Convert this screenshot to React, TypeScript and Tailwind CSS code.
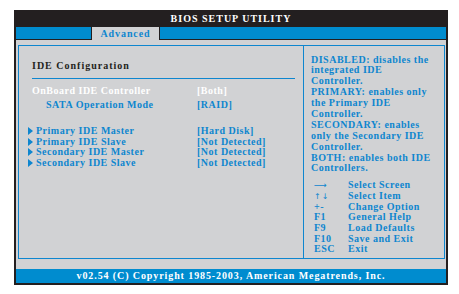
const font = { fontFamily: '"Liberation Serif", "Times New Roman", serif' };
const glyph = { fontFamily: '"DejaVu Sans", sans-serif', fontWeight: 400 };

const helpLines = [
  "DISABLED: disables the",
  "integrated IDE",
  "Controller.",
  "PRIMARY: enables only",
  "the Primary IDE",
  "Controller.",
  "SECONDARY: enables",
  "only the Secondary IDE",
  "Controller.",
  "BOTH: enables both IDE",
  "Controllers.",
];

const keys: [React.ReactNode, string][] = [
  [<span style={glyph} className="text-[9px]">{"\u27F6"}</span>, "Select Screen"],
  [<span style={glyph} className="text-[8px] tracking-[1px]">{"\u2191\u2193"}</span>, "Select Item"],
  ["+-", "Change Option"],
  ["F1", "General Help"],
  ["F9", "Load Defaults"],
  ["F10", "Save and Exit"],
  ["ESC", "Exit"],
];

const drives = [
  ["Primary IDE Master", "[Hard Disk]"],
  ["Primary IDE Slave", "[Not Detected]"],
  ["Secondary IDE Master", "[Not Detected]"],
  ["Secondary IDE Slave", "[Not Detected]"],
];

function Arrow() {
  return (
    <svg width="5" height="8" viewBox="0 0 5 8" className="mr-[3px] shrink-0">
      <path d="M0 0 L5 4 L0 8 Z" fill="#0e86cf" />
    </svg>
  );
}

export default function App() {
  return (
    <div className="w-[459px] h-[294px] bg-white pt-[10px] pl-[14px]" style={font}>
      <div className="w-[434px] bg-[#231f20] px-[2px] pb-[1.5px] font-bold">
        {/* title */}
        <div className="h-[17px] flex items-center justify-center text-white text-[10px] tracking-[1px] leading-none">
          BIOS SETUP UTILITY
        </div>

        {/* tab bar */}
        <div className="h-[13px] flex">
          <div className="w-[76px] bg-[#008ccf] border-r border-b border-[#231f20]" />
          <div className="w-[67px] bg-[#d1d2d4] flex items-center justify-center text-[10px] text-[#0e86cf] tracking-[0.9px] leading-none">
            Advanced
          </div>
          <div className="flex-1 bg-[#008ccf] border-l border-b border-[#231f20]" />
        </div>

        {/* main */}
        <div className="bg-[#d1d2d4] pt-[5px] pb-[10px] pl-[2px] pr-[1px]">
          <div className="h-[214px] border border-[#0e86cf] flex text-[10px] tracking-[0.5px]">
            {/* left pane */}
            <div className="w-[285px] border-r border-[#0e86cf] pt-[14px] pl-[13px] pr-[8px]">
              <div className="h-[12px] leading-[12px] text-[#231f20] tracking-[1px]">IDE Configuration</div>
              <div className="mt-[6px] h-px bg-[#0e86cf]" />
              <div className="mt-[5px] h-[14px] leading-[14px] flex text-white">
                <span className="w-[165px]">OnBoard IDE Controller</span>
                <span>[Both]</span>
              </div>
              <div className="h-[14px] leading-[14px] flex text-[#0e86cf]">
                <span className="w-[165px] pl-[14px]">SATA Operation Mode</span>
                <span>[RAID]</span>
              </div>
              <div className="mt-[14px]">
                {drives.map(([label, value]) => (
                  <div key={label} className="h-[10.5px] leading-[10.5px] flex text-[#0e86cf]">
                    <span className="w-[165px] -ml-[4px] flex items-center">
                      <Arrow />
                      {label}
                    </span>
                    <span className="ml-[4px]">{value}</span>
                  </div>
                ))}
              </div>
            </div>

            {/* help pane */}
            <div className="flex-1 pt-[8.5px] pl-[7px] text-[#0e86cf]">
              {helpLines.map((line, i) => (
                <div key={i} className="h-[10.9px] leading-[10.9px] whitespace-nowrap">
                  {line}
                </div>
              ))}
              <div className="mt-[6px] pl-[3px]">
                {keys.map(([k, label]) => (
                  <div key={label} className="h-[10.7px] leading-[10.7px] flex whitespace-nowrap">
                    <span className="w-[34px]">{k}</span>
                    <span>{label}</span>
                  </div>
                ))}
              </div>
            </div>
          </div>
        </div>

        {/* footer */}
        <div className="h-[14px] bg-[#008ccf] flex items-center justify-center text-white text-[10px] tracking-[0.9px] leading-none whitespace-nowrap">
          v02.54 (C) Copyright 1985-2003, American Megatrends, Inc.
        </div>
      </div>
    </div>
  );
}
